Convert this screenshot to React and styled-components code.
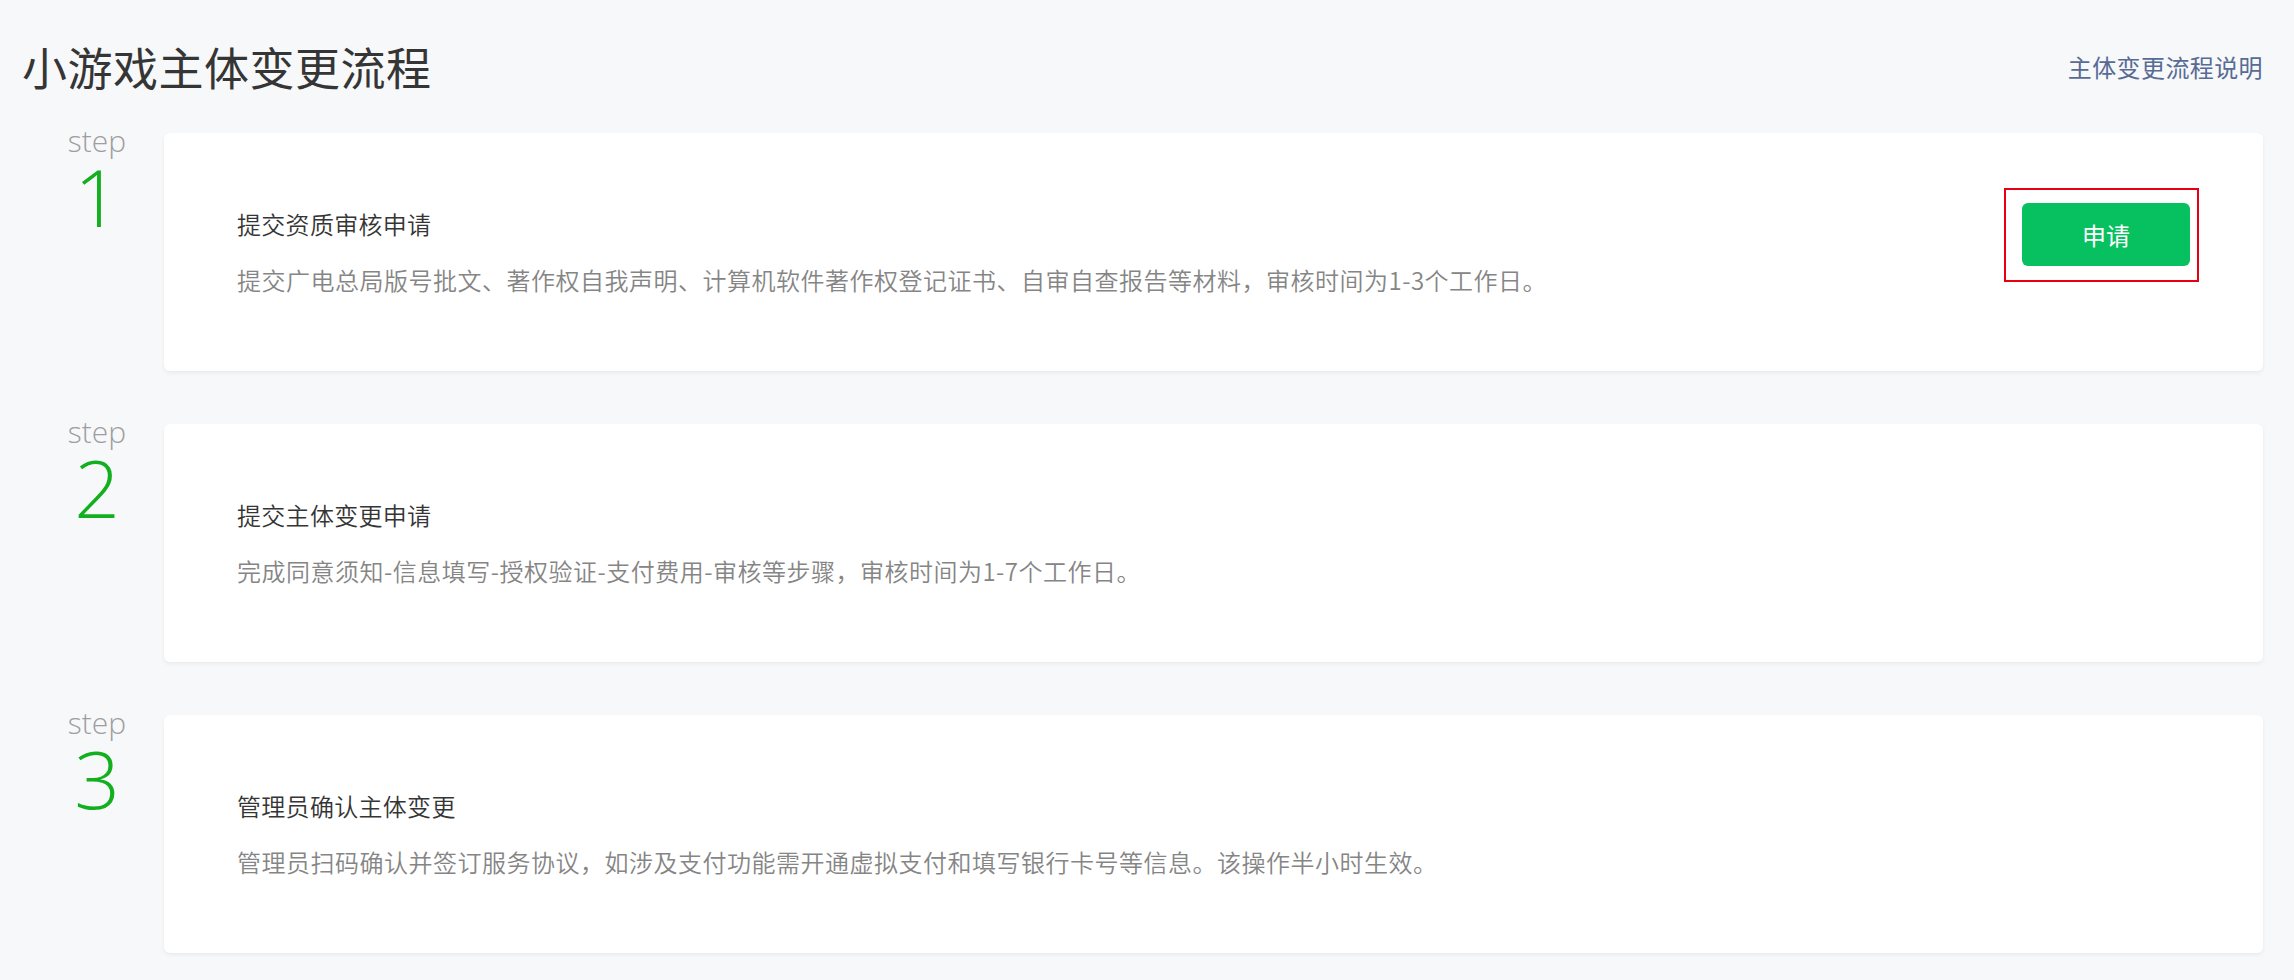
import React from "react";
import styled, { createGlobalStyle } from "styled-components";

const GlobalStyle = createGlobalStyle`
  html, body {
    margin: 0;
    padding: 0;
    background: #f7f8fa;
  }
  body {
    font-family: "Noto Sans CJK SC", "Noto Sans", sans-serif;
    color: #353535;
  }
`;

const Page = styled.div`
  padding: 0 31px 27px 22px;
`;

const Header = styled.header`
  height: 133px;
  display: flex;
  align-items: center;
  justify-content: space-between;
`;

const Title = styled.h1`
  margin: 0;
  font-size: 45px;
  line-height: 45px;
  font-weight: 400;
  color: #353535;
  letter-spacing: 0.5px;
`;

const HelpLink = styled.a`
  font-size: 24px;
  line-height: 36px;
  color: #576b95;
  text-decoration: none;
  letter-spacing: 0.4px;
  cursor: pointer;
`;

const StepList = styled.div`
  display: flex;
  flex-direction: column;
  gap: 53px;
`;

const StepRow = styled.section`
  display: flex;
  align-items: stretch;
`;

const StepMark = styled.div`
  width: 134px;
  padding-left: 8px;
  display: flex;
  flex-direction: column;
  align-items: center;
  font-family: "Open Sans", "Lato", sans-serif;
  font-weight: 300;
`;

const StepWord = styled.span`
  margin-top: -3px;
  font-size: 30px;
  line-height: 22px;
  color: #9e9e9e;
`;

const StepNum = styled.span`
  margin-top: 4px;
  font-size: 80px;
  line-height: 80px;
  color: #13af1f;
`;

const Card = styled.div`
  flex: 1;
  height: 238px;
  box-sizing: border-box;
  background: #ffffff;
  border-radius: 6px;
  box-shadow: 0 2px 4px rgba(0, 0, 0, 0.06);
  display: flex;
  align-items: center;
  padding: 0 73px;
`;

const CardBody = styled.div`
  flex: 1;
  display: flex;
  flex-direction: column;
  gap: 20px;
`;

const CardTitle = styled.h2`
  margin: 0;
  font-size: 24px;
  line-height: 36px;
  font-weight: 350;
  color: #353535;
  letter-spacing: 0.3px;
`;

const CardDesc = styled.p`
  margin: 0;
  font-size: 24px;
  line-height: 36px;
  font-weight: 350;
  color: #858585;
  letter-spacing: 0.5px;
`;

const Highlight = styled.div`
  position: relative;
  align-self: flex-start;
  margin-top: 70px;
  &::after {
    content: "";
    position: absolute;
    top: -15px;
    bottom: -16px;
    left: -18px;
    right: -9px;
    border: 2px solid #e60012;
    pointer-events: none;
  }
`;

const ApplyButton = styled.button`
  display: block;
  width: 168px;
  height: 63px;
  border: none;
  border-radius: 6px;
  background: #07c160;
  color: #ffffff;
  font-family: "Noto Sans CJK SC", sans-serif;
  font-size: 24px;
  line-height: 63px;
  padding: 0;
  cursor: pointer;
`;

const steps = [
  {
    n: 1,
    title: "提交资质审核申请",
    desc: "提交广电总局版号批文、著作权自我声明、计算机软件著作权登记证书、自审自查报告等材料，审核时间为1-3个工作日。",
    action: true,
  },
  {
    n: 2,
    title: "提交主体变更申请",
    desc: "完成同意须知-信息填写-授权验证-支付费用-审核等步骤，审核时间为1-7个工作日。",
  },
  {
    n: 3,
    title: "管理员确认主体变更",
    desc: "管理员扫码确认并签订服务协议，如涉及支付功能需开通虚拟支付和填写银行卡号等信息。该操作半小时生效。",
  },
];

export default function App() {
  return (
    <>
      <GlobalStyle />
      <Page>
        <Header>
          <Title>小游戏主体变更流程</Title>
          <HelpLink>主体变更流程说明</HelpLink>
        </Header>
        <StepList>
          {steps.map((s) => (
            <StepRow key={s.n}>
              <StepMark>
                <StepWord>step</StepWord>
                <StepNum>{s.n}</StepNum>
              </StepMark>
              <Card>
                <CardBody>
                  <CardTitle>{s.title}</CardTitle>
                  <CardDesc>{s.desc}</CardDesc>
                </CardBody>
                {s.action && (
                  <Highlight>
                    <ApplyButton>申请</ApplyButton>
                  </Highlight>
                )}
              </Card>
            </StepRow>
          ))}
        </StepList>
      </Page>
    </>
  );
}
